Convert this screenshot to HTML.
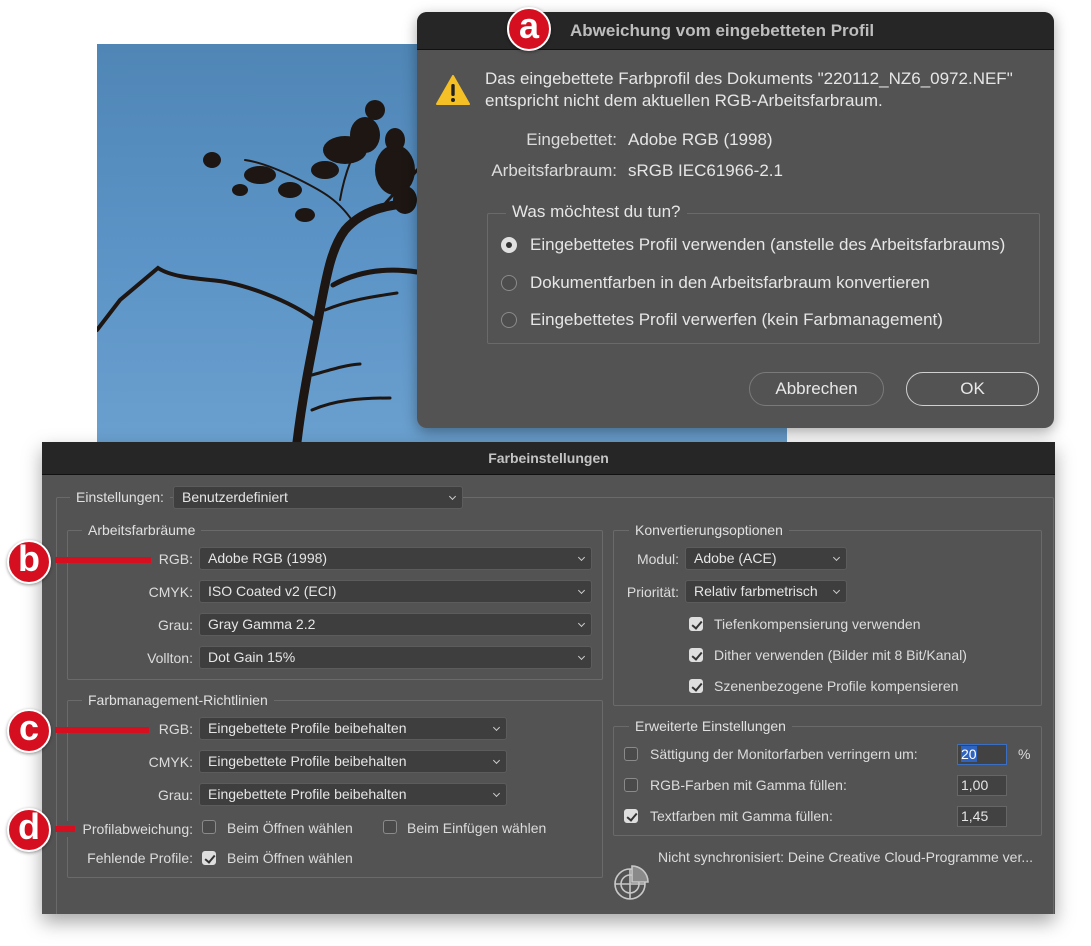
<!DOCTYPE html>
<html><head><meta charset="utf-8"><style>
*{margin:0;padding:0;box-sizing:border-box}
body{width:1091px;height:946px;background:#fff;position:relative;overflow:hidden;font-family:"Liberation Sans",sans-serif;color:#dcdcdc}
.a{position:absolute}
.t{position:absolute;white-space:nowrap;line-height:16px;font-size:14px}
.r{text-align:right}
.dd{position:absolute;height:23px;background:#3e3e3e;border:1px solid #5c5c5c;border-radius:3px;font-size:14px;line-height:21px;padding-left:8px;color:#e6e6e6;white-space:nowrap}
.dd:after{content:"";position:absolute;right:7px;top:7px;width:4px;height:4px;border-right:1.3px solid #ccc;border-bottom:1.3px solid #ccc;transform:rotate(45deg)}
.grp{position:absolute;border:1px solid #6a6a6a;border-radius:2px}
.lg{position:absolute;background:#535353;padding:0 6px;font-size:14px;line-height:16px;white-space:nowrap;color:#e0e0e0}
.cb{position:absolute;width:14px;height:14px;border:1px solid #8a8a8a;border-radius:3px;background:#4a4a4a}
.cb.on{background:#dedede;border-color:#dedede}
.cb.on:after{content:"";position:absolute;left:4px;top:1px;width:4px;height:8px;border-right:2px solid #333;border-bottom:2px solid #333;transform:rotate(40deg)}
.badge{position:absolute;width:44px;height:44px;border-radius:50%;background:#d50f1f;border:2.5px solid #fff;color:#fff;font-weight:bold;font-size:36px;line-height:34px;text-align:center;box-shadow:0 1px 3px rgba(0,0,0,.4)}
.rl{position:absolute;height:6px;background:#d50f1f}
.rad{position:absolute;width:16px;height:16px;border-radius:50%;border:1px solid #8a8a8a;background:#4d4d4d}
.btn{position:absolute;height:34px;border:1px solid #aaa;border-radius:17px;text-align:center;line-height:32px;font-size:17px;color:#e8e8e8}
.inp{position:absolute;height:21px;background:#424242;border:1px solid #666;font-size:14px;line-height:19px;padding-left:3px;color:#e6e6e6}
.big{font-size:17px;line-height:18px;color:#e6e6e6}
</style></head><body>

<!-- photo -->
<div class="a" style="left:97px;top:44px;width:690px;height:400px;background:linear-gradient(180deg,#4f86b6 0%,#5b93c6 50%,#6aa0cf 100%)"></div>
<svg class="a" style="left:97px;top:44px" width="690" height="400" viewBox="97 44 690 400">
<g fill="none" stroke="#1d1612" stroke-linecap="round">
<path d="M297 442 C302 400 310 360 318 320 C326 280 330 250 345 230 C358 215 375 208 395 205" stroke-width="9"/>
<path d="M318 322 C290 300 240 282 210 280 C190 278 170 276 158 268 L120 300 L97 330" stroke-width="4"/>
<path d="M333 285 C360 270 390 268 417 272" stroke-width="5"/>
<path d="M325 310 C350 300 370 297 397 293" stroke-width="3"/>
<path d="M312 375 C330 370 345 365 360 364" stroke-width="3"/>
<path d="M312 410 C335 400 360 398 390 398" stroke-width="3"/>
<path d="M355 225 C340 200 320 190 300 180 C280 170 260 162 245 160" stroke-width="2"/>
<path d="M380 210 C395 190 410 180 417 170" stroke-width="3"/>
<path d="M340 200 C345 170 355 150 365 130" stroke-width="2"/>
</g>
<g fill="#1d1612">
<ellipse cx="345" cy="150" rx="22" ry="14"/>
<ellipse cx="365" cy="135" rx="15" ry="18"/>
<ellipse cx="395" cy="170" rx="20" ry="25"/>
<ellipse cx="405" cy="200" rx="12" ry="14"/>
<ellipse cx="325" cy="170" rx="14" ry="9"/>
<ellipse cx="260" cy="175" rx="16" ry="9"/>
<ellipse cx="290" cy="190" rx="12" ry="8"/>
<ellipse cx="305" cy="215" rx="10" ry="7"/>
<ellipse cx="212" cy="160" rx="9" ry="8"/>
<ellipse cx="240" cy="190" rx="8" ry="6"/>
<ellipse cx="375" cy="110" rx="10" ry="10"/>
<ellipse cx="395" cy="140" rx="10" ry="12"/>
</g>
</svg>

<!-- dialog a -->
<div class="a" style="left:417px;top:12px;width:637px;height:416px;background:#535353;border-radius:10px;overflow:hidden;box-shadow:0 4px 14px rgba(0,0,0,.35)">
<div class="a" style="left:0;top:0;width:637px;height:38px;background:#262626;border-bottom:1px solid #111"></div>
</div>
<div class="t" style="left:570px;top:21px;font-size:17px;font-weight:bold;color:#bdbdbd;line-height:20px">Abweichung vom eingebetteten Profil</div>
<div class="badge" style="left:507px;top:7px">a</div>
<svg class="a" style="left:436px;top:75px" width="34" height="30"><path d="M17 1 L33 29 L1 29 Z" fill="#f4c025" stroke="#f4c025" stroke-linejoin="round" stroke-width="2"/><rect x="15.3" y="9" width="3.4" height="12" rx="1.5" fill="#222"/><circle cx="17" cy="25" r="2" fill="#222"/></svg>
<div class="t big" style="left:485px;top:68px;line-height:22px">Das eingebettete Farbprofil des Dokuments "220112_NZ6_0972.NEF"<br>entspricht nicht dem aktuellen RGB-Arbeitsfarbraum.</div>
<div class="t r big" style="left:440px;width:177px;top:131px;color:#dcdcdc">Eingebettet:</div>
<div class="t big" style="left:628px;top:131px">Adobe RGB (1998)</div>
<div class="t r big" style="left:440px;width:177px;top:162px;color:#dcdcdc">Arbeitsfarbraum:</div>
<div class="t big" style="left:628px;top:162px">sRGB IEC61966-2.1</div>
<div class="grp" style="left:487px;top:213px;width:553px;height:131px"></div>
<div class="lg big" style="left:506px;top:203px">Was möchtest du tun?</div>
<div class="rad" style="left:501px;top:237px;background:#e0e0e0;border-color:#e0e0e0"><div class="a" style="left:4px;top:4px;width:6px;height:6px;border-radius:50%;background:#333"></div></div>
<div class="t big" style="left:530px;top:236px">Eingebettetes Profil verwenden (anstelle des Arbeitsfarbraums)</div>
<div class="rad" style="left:501px;top:275px"></div>
<div class="t big" style="left:530px;top:274px">Dokumentfarben in den Arbeitsfarbraum konvertieren</div>
<div class="rad" style="left:501px;top:312px"></div>
<div class="t big" style="left:530px;top:311px">Eingebettetes Profil verwerfen (kein Farbmanagement)</div>
<div class="btn" style="left:749px;top:372px;width:135px;border-color:#7a7a7a">Abbrechen</div>
<div class="btn" style="left:906px;top:372px;width:133px;border-color:#d0d0d0">OK</div>

<!-- main dialog -->
<div class="a" style="left:42px;top:442px;width:1013px;height:472px;background:#535353;box-shadow:0 8px 18px rgba(0,0,0,.35);overflow:hidden">
<div class="a" style="left:0;top:0;width:1013px;height:33px;background:#262626;border-bottom:1px solid #111"></div>
<div class="grp" style="left:14px;top:55px;width:998px;height:430px"></div>
</div>
<div class="t" style="left:42px;width:1013px;text-align:center;top:450px;font-weight:bold;color:#c4c4c4">Farbeinstellungen</div>
<div class="lg" style="left:70px;top:489px">Einstellungen:</div>
<div class="dd" style="left:173px;top:486px;width:290px">Benutzerdefiniert</div>

<div class="grp" style="left:67px;top:530px;width:536px;height:150px"></div>
<div class="lg" style="left:82px;top:522px">Arbeitsfarbräume</div>
<div class="t r" style="left:100px;width:93px;top:551px">RGB:</div>
<div class="dd" style="left:199px;top:547px;width:393px">Adobe RGB (1998)</div>
<div class="t r" style="left:100px;width:93px;top:584px">CMYK:</div>
<div class="dd" style="left:199px;top:580px;width:393px">ISO Coated v2 (ECI)</div>
<div class="t r" style="left:100px;width:93px;top:617px">Grau:</div>
<div class="dd" style="left:199px;top:613px;width:393px">Gray Gamma 2.2</div>
<div class="t r" style="left:100px;width:93px;top:650px">Vollton:</div>
<div class="dd" style="left:199px;top:646px;width:393px">Dot Gain 15%</div>

<div class="grp" style="left:67px;top:700px;width:536px;height:178px"></div>
<div class="lg" style="left:82px;top:692px">Farbmanagement-Richtlinien</div>
<div class="t r" style="left:100px;width:93px;top:721px">RGB:</div>
<div class="dd" style="left:199px;top:717px;width:308px">Eingebettete Profile beibehalten</div>
<div class="t r" style="left:100px;width:93px;top:754px">CMYK:</div>
<div class="dd" style="left:199px;top:750px;width:308px">Eingebettete Profile beibehalten</div>
<div class="t r" style="left:100px;width:93px;top:787px">Grau:</div>
<div class="dd" style="left:199px;top:783px;width:308px">Eingebettete Profile beibehalten</div>
<div class="t r" style="left:60px;width:133px;top:821px;background:#535353">Profilabweichung:</div>
<div class="cb" style="left:202px;top:820px"></div>
<div class="t" style="left:227px;top:820px">Beim Öffnen wählen</div>
<div class="cb" style="left:383px;top:820px"></div>
<div class="t" style="left:407px;top:820px">Beim Einfügen wählen</div>
<div class="t r" style="left:60px;width:133px;top:850px">Fehlende Profile:</div>
<div class="cb on" style="left:202px;top:851px"></div>
<div class="t" style="left:227px;top:850px">Beim Öffnen wählen</div>

<div class="grp" style="left:613px;top:530px;width:429px;height:176px"></div>
<div class="lg" style="left:629px;top:522px">Konvertierungsoptionen</div>
<div class="t r" style="left:610px;width:69px;top:551px">Modul:</div>
<div class="dd" style="left:685px;top:547px;width:162px">Adobe (ACE)</div>
<div class="t r" style="left:610px;width:69px;top:584px">Priorität:</div>
<div class="dd" style="left:685px;top:580px;width:162px">Relativ farbmetrisch</div>
<div class="cb on" style="left:689px;top:617px"></div>
<div class="t" style="left:714px;top:616px">Tiefenkompensierung verwenden</div>
<div class="cb on" style="left:689px;top:648px"></div>
<div class="t" style="left:714px;top:647px">Dither verwenden (Bilder mit 8 Bit/Kanal)</div>
<div class="cb on" style="left:689px;top:679px"></div>
<div class="t" style="left:714px;top:678px">Szenenbezogene Profile kompensieren</div>

<div class="grp" style="left:613px;top:726px;width:429px;height:110px"></div>
<div class="lg" style="left:629px;top:718px">Erweiterte Einstellungen</div>
<div class="cb" style="left:624px;top:747px"></div>
<div class="t" style="left:650px;top:746px">Sättigung der Monitorfarben verringern um:</div>
<div class="inp" style="left:957px;top:744px;width:50px;border-color:#3a6fc4"><span style="background:#2f63c0;color:#fff">20</span></div>
<div class="t" style="left:1018px;top:746px">%</div>
<div class="cb" style="left:624px;top:778px"></div>
<div class="t" style="left:650px;top:777px">RGB-Farben mit Gamma füllen:</div>
<div class="inp" style="left:957px;top:775px;width:50px">1,00</div>
<div class="cb on" style="left:624px;top:809px"></div>
<div class="t" style="left:650px;top:808px">Textfarben mit Gamma füllen:</div>
<div class="inp" style="left:957px;top:806px;width:50px">1,45</div>
<div class="t" style="left:658px;top:849px">Nicht synchronisiert: Deine Creative Cloud-Programme ver...</div>
<svg class="a" style="left:612px;top:862px" width="40" height="40" viewBox="0 0 40 40"><g fill="none" stroke="#c8c8c8" stroke-width="1.6"><circle cx="18" cy="22" r="15"/><circle cx="18" cy="22" r="9"/><path d="M3 22 H33 M18 7 V37"/></g><path d="M20 4 A16 16 0 0 1 36 20 H20 Z" fill="#8a8a8a" stroke="#c8c8c8" stroke-width="1.6"/></svg>

<!-- badges -->
<div class="rl" style="left:55px;top:557px;width:96px"></div>
<div class="badge" style="left:7px;top:540px">b</div>
<div class="rl" style="left:55px;top:727px;width:94px"></div>
<div class="badge" style="left:7px;top:709px">c</div>
<div class="rl" style="left:55px;top:826px;width:20px"></div>
<div class="badge" style="left:7px;top:808px">d</div>
</body></html>
